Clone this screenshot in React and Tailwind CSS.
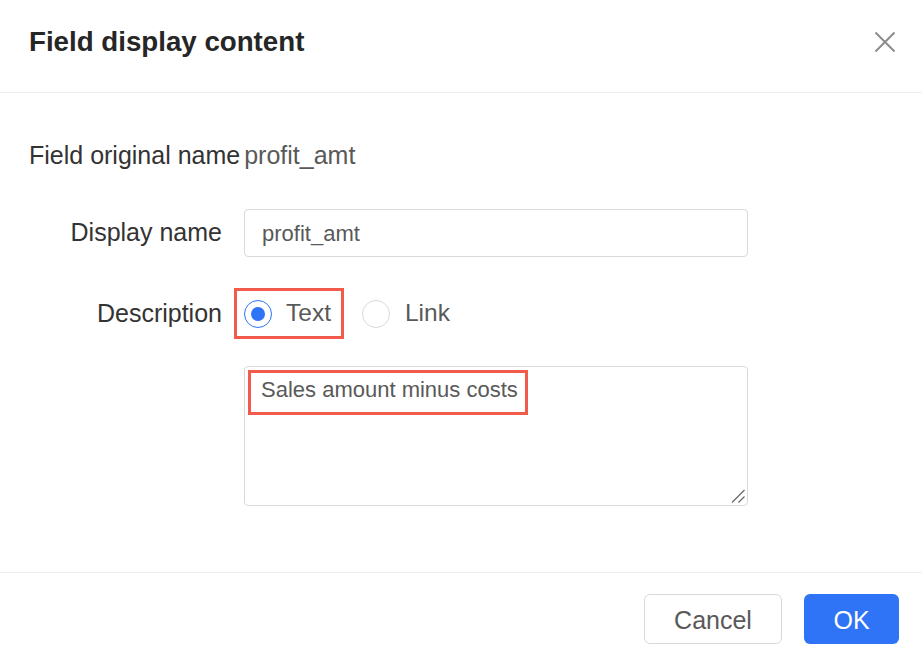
import React from "react";

export default function App() {
  return (
    <div
      className="w-[922px] h-[666px] bg-white flex flex-col overflow-hidden"
      style={{ fontFamily: '"Liberation Sans", Arial, sans-serif' }}
    >
      {/* Header */}
      <div className="h-[93px] border-b border-[#eeeeee] flex items-start justify-between pl-[29px] pr-[26px] pt-[28px] shrink-0">
        <div className="text-[27.7px] leading-[28px] font-bold text-[#262626]">Field display content</div>
        <svg width="22" height="22" viewBox="0 0 22 22" className="mt-[3px]">
          <path d="M1.5 1.5 L20.5 20.5 M20.5 1.5 L1.5 20.5" stroke="#8c8c8c" strokeWidth="2" fill="none" />
        </svg>
      </div>

      {/* Body */}
      <div className="flex-1 flex flex-col pl-[29px] pt-[51px]">
        <div className="flex items-center h-[22px] gap-[4px] text-[25px] leading-[22px]">
          <span className="text-[#333333]">Field original name</span>
          <span className="text-[#595959]">profit_amt</span>
        </div>

        <div className="flex items-center mt-[43px] h-[48px]">
          <div className="w-[193px] text-right text-[25px] text-[#333333]">Display name</div>
          <div className="ml-[22px] w-[504px] h-[48px] border border-[#d9d9d9] rounded-[4px] flex items-center px-[17px] text-[22px] text-[#595959]">
            profit_amt
          </div>
        </div>

        <div className="flex items-center mt-[31px] h-[51px]">
          <div className="w-[193px] text-right text-[25px] text-[#333333]">Description</div>
          <div className="ml-[12px] flex items-center">
            <div className="h-[51px] border-[3px] border-[#f25a4c] flex items-center pl-[7px] pr-[10px]">
              <span className="w-[28px] h-[28px] rounded-full border border-[#2f74f7] flex items-center justify-center">
                <span className="w-[14px] h-[14px] rounded-full bg-[#2f74f7]" />
              </span>
              <span className="ml-[14px] text-[24.5px] text-[#595959]">Text</span>
            </div>
            <div className="ml-[18px] flex items-center">
              <span className="w-[28px] h-[28px] rounded-full border border-[#d9d9d9]" />
              <span className="ml-[15px] text-[24.5px] text-[#595959]">Link</span>
            </div>
          </div>
        </div>

        <div className="mt-[27px] ml-[215px] relative w-[504px] h-[140px]">
          <textarea
            readOnly
            defaultValue="Sales amount minus costs"
            className="block resize-none w-[504px] h-[140px] border border-[#d9d9d9] rounded-[4px] px-[16px] pt-[11px] text-[22px] leading-[24px] text-[#595959] outline-none"
            style={{ fontFamily: '"Liberation Sans", Arial, sans-serif' }}
          />
          <svg width="16" height="16" viewBox="0 0 16 16" className="absolute right-[2px] bottom-[2px] pointer-events-none">
            <path d="M2 14.5 L14.5 2 M8.5 14.5 L14.5 8.5" stroke="#6b6b6b" strokeWidth="1.3" fill="none" />
          </svg>
          <div className="absolute left-[4px] top-[4px] w-[280px] h-[45px] border-[3px] border-[#f25a4c] pointer-events-none" />
        </div>
      </div>

      {/* Footer */}
      <div className="h-[94px] border-t border-[#eeeeee] flex items-start justify-end gap-[22px] pr-[23px] pt-[21px] shrink-0">
        <div className="w-[138px] h-[50px] border border-[#d9d9d9] rounded-[6px] flex items-center justify-center pt-[3px] text-[25px] text-[#595959]">
          Cancel
        </div>
        <div className="w-[95px] h-[50px] rounded-[6px] bg-[#2f74f7] flex items-center justify-center pt-[3px] text-[25px] text-white">
          OK
        </div>
      </div>
    </div>
  );
}
